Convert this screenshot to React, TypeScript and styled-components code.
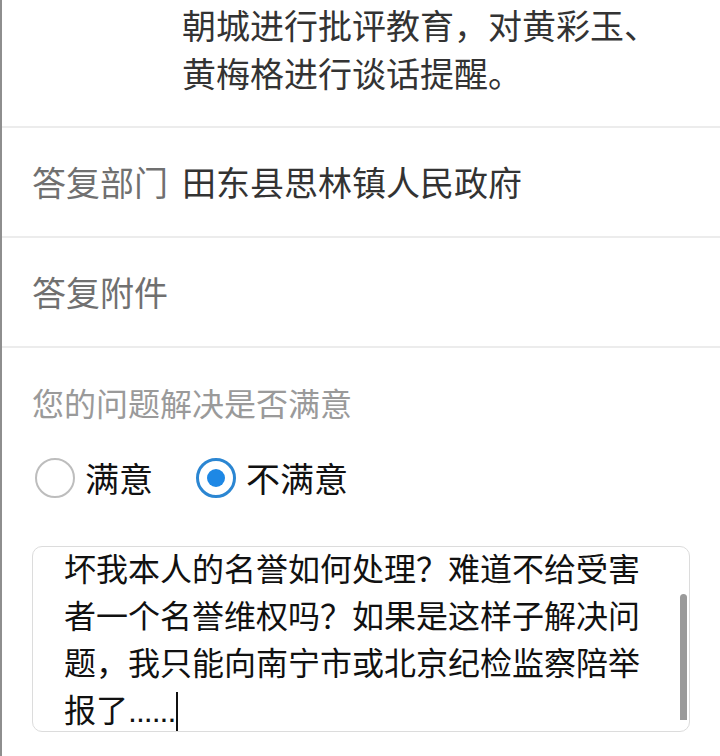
import React from "react";
import styled, { createGlobalStyle } from "styled-components";

const Global = createGlobalStyle`
  html, body { margin: 0; padding: 0; background: #ffffff; }
  body { font-family: "Noto Sans CJK SC", "Noto Sans", sans-serif; }
  * { box-sizing: border-box; }
`;

const Page = styled.div`
  width: 720px;
  min-height: 756px;
  background: #ffffff;
  border-left: 2px solid #8e8e8e;
  display: flex;
  flex-direction: column;
`;

const Row = styled.div<{ $first?: boolean }>`
  display: flex;
  align-items: flex-start;
  gap: 14px;
  padding: ${(p) => (p.$first ? "1px 32px 29px 30px" : "30px 32px 30px 30px")};
  border-bottom: 2px solid #ececec;
  font-size: 34px;
  line-height: 48px;
`;

const Label = styled.div`
  flex: 0 0 136px;
  color: #707070;
  white-space: nowrap;
`;

const Value = styled.div`
  flex: 1;
  color: #333333;
`;

const Section = styled.div`
  padding: 32px 30px 0 30px;
  display: flex;
  flex-direction: column;
`;

const Question = styled.div`
  font-size: 32px;
  line-height: 44px;
  color: #9a9a9a;
`;

const RadioGroup = styled.div`
  display: flex;
  align-items: center;
  gap: 43px;
  margin-top: 32px;
  padding-left: 3px;
  height: 44px;
`;

const Option = styled.label`
  display: flex;
  align-items: center;
  gap: 10px;
  font-size: 34px;
  line-height: 44px;
  color: #111111;
`;

const Circle = styled.span<{ $checked?: boolean }>`
  width: 40px;
  height: 40px;
  border-radius: 50%;
  border: ${(p) => (p.$checked ? "3px solid #2b86d2" : "2px solid #bdbdbd")};
  display: flex;
  align-items: center;
  justify-content: center;
  flex: 0 0 auto;
`;

const Dot = styled.span`
  width: 18px;
  height: 18px;
  border-radius: 50%;
  background: #1e88e5;
`;

const TextBox = styled.div`
  position: relative;
  margin-top: 46px;
  width: 658px;
  height: 186px;
  border: 1px solid #dcdcdc;
  border-radius: 10px;
  overflow: hidden;
  padding: 0 36px 0 31px;
`;

const TextContent = styled.div`
  margin-top: -3px;
  font-size: 32px;
  line-height: 47px;
  color: #111111;
  word-break: break-all;
`;

const Caret = styled.span`
  display: inline-block;
  width: 2px;
  height: 40px;
  background: #111111;
  vertical-align: -10px;
  margin-left: 1px;
`;

const Dots = styled.span`
  font-family: "Liberation Sans", "Noto Sans", sans-serif;
  letter-spacing: -1px;
`;

const ScrollThumb = styled.div`
  position: absolute;
  right: 2px;
  top: 47px;
  width: 7px;
  height: 126px;
  background: #9a9a9a;
  border-radius: 4px 4px 0 0;
`;

export default function App() {
  return (
    <>
      <Global />
      <Page>
        <Row $first>
          <Label />
          <Value>朝城进行批评教育，对黄彩玉、黄梅格进行谈话提醒。</Value>
        </Row>
        <Row>
          <Label>答复部门</Label>
          <Value>田东县思林镇人民政府</Value>
        </Row>
        <Row>
          <Label>答复附件</Label>
          <Value />
        </Row>
        <Section>
          <Question>您的问题解决是否满意</Question>
          <RadioGroup>
            <Option>
              <Circle />
              满意
            </Option>
            <Option>
              <Circle $checked>
                <Dot />
              </Circle>
              不满意
            </Option>
          </RadioGroup>
          <TextBox>
            <TextContent>
              坏我本人的名誉如何处理？难道不给受害者一个名誉维权吗？如果是这样子解决问题，我只能向南宁市或北京纪检监察陪举报了
              <Dots>......</Dots>
              <Caret />
            </TextContent>
            <ScrollThumb />
          </TextBox>
        </Section>
      </Page>
    </>
  );
}
